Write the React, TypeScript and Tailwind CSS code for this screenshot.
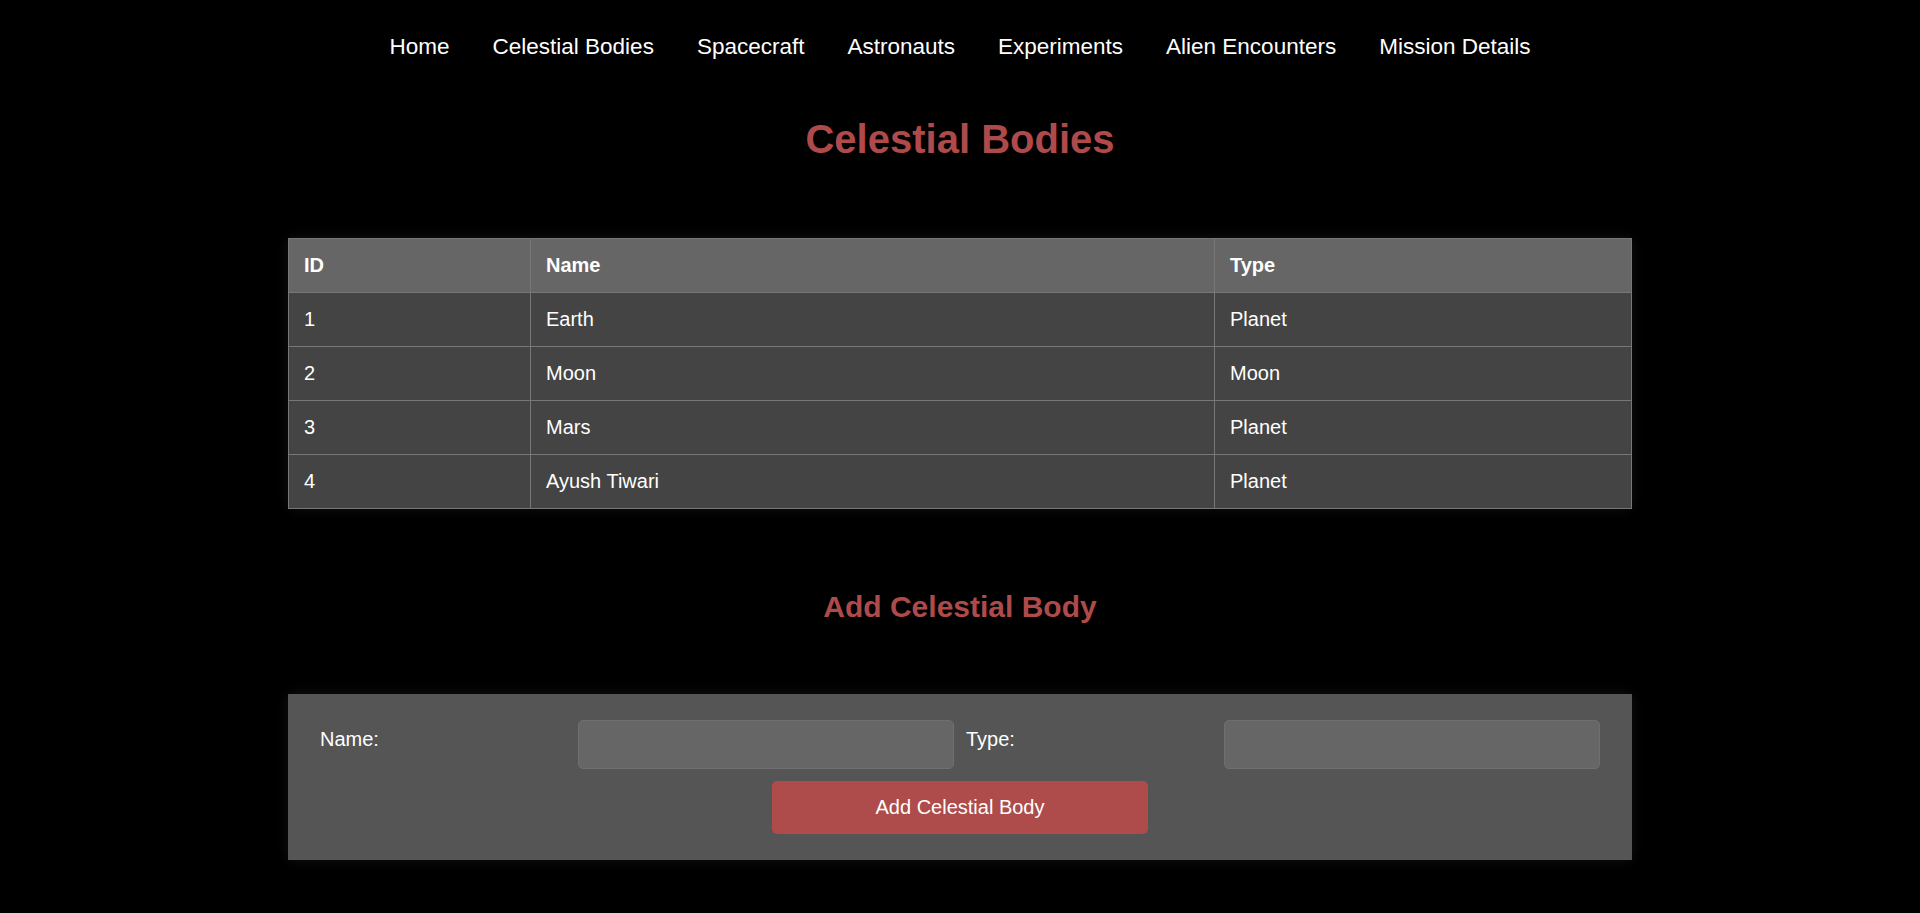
import React from "react";

const navItems = [
  "Home",
  "Celestial Bodies",
  "Spacecraft",
  "Astronauts",
  "Experiments",
  "Alien Encounters",
  "Mission Details",
];

const rows = [
  { id: 1, name: "Earth", type: "Planet" },
  { id: 2, name: "Moon", type: "Moon" },
  { id: 3, name: "Mars", type: "Planet" },
  { id: 4, name: "Ayush Tiwari", type: "Planet" },
];

export default function App() {
  return (
    <div
      className="min-h-[913px] bg-black text-white"
      style={{ fontFamily: '"Liberation Sans", Arial, sans-serif' }}
    >
      <nav className="flex justify-center gap-[43px] pt-[34px]">
        {navItems.map((n) => (
          <a key={n} className="text-[22.5px] leading-[26px] text-white">
            {n}
          </a>
        ))}
      </nav>

      <h1 className="mt-[56px] text-center text-[40px] font-bold leading-[46px] text-[#ae4a4a]">
        Celestial Bodies
      </h1>

      <div className="mx-auto mt-[76px] w-[1344px] shadow-[0_0_12px_rgba(255,255,255,0.07)]">
        <table className="w-full border-collapse border border-[#777] text-[20px] leading-[23px]">
          <thead>
            <tr className="bg-[#666]">
              <th className="w-[242px] border border-[#777] px-[15px] py-[15px] text-left font-bold">ID</th>
              <th className="w-[684px] border border-[#777] px-[15px] py-[15px] text-left font-bold">Name</th>
              <th className="border border-[#777] px-[15px] py-[15px] text-left font-bold">Type</th>
            </tr>
          </thead>
          <tbody>
            {rows.map((r) => (
              <tr key={r.id} className="bg-[#444]">
                <td className="border border-[#777] px-[15px] py-[15px]">{r.id}</td>
                <td className="border border-[#777] px-[15px] py-[15px]">{r.name}</td>
                <td className="border border-[#777] px-[15px] py-[15px]">{r.type}</td>
              </tr>
            ))}
          </tbody>
        </table>
      </div>

      <h2 className="mt-[81px] text-center text-[30px] font-bold leading-[34.5px] text-[#ae4a4a]">
        Add Celestial Body
      </h2>

      <form
        className="mx-auto mt-[69px] w-[1344px] bg-[#555] px-[32px] pb-[26px] pt-[26px] shadow-[0_0_12px_rgba(255,255,255,0.07)]"
        onSubmit={(e) => e.preventDefault()}
      >
        <div className="grid grid-cols-[246px_376px_246px_376px] gap-x-[12px] gap-y-[12px]">
          <label className="pt-[8px] text-[20px] leading-[23px]">Name:</label>
          <input className="h-[49px] rounded-[5px] border border-[#6f6f6f] bg-[#666] px-3 text-[20px] text-white outline-none" />
          <label className="pt-[8px] text-[20px] leading-[23px]">Type:</label>
          <input className="h-[49px] rounded-[5px] border border-[#6f6f6f] bg-[#666] px-3 text-[20px] text-white outline-none" />
          <div className="col-span-4 flex justify-center">
            <button
              type="submit"
              className="h-[53px] w-[376px] rounded-[5px] bg-[#ae4b4b] text-[20px] text-white"
            >
              Add Celestial Body
            </button>
          </div>
        </div>
      </form>
    </div>
  );
}
